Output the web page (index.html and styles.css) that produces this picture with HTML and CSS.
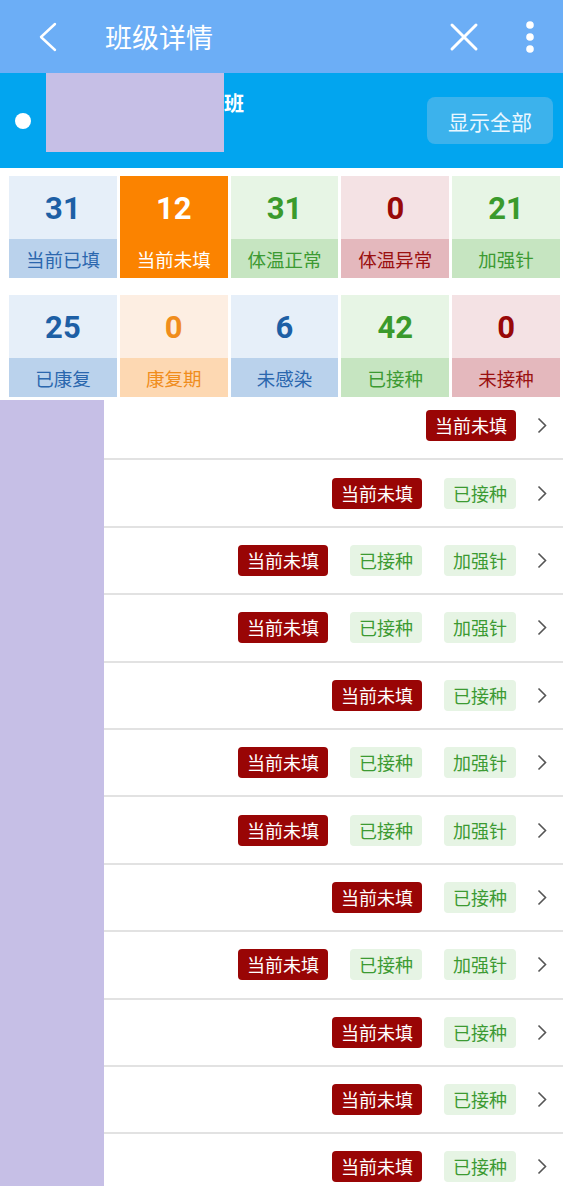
FILE: index.html
```html
<!DOCTYPE html>
<html lang="zh">
<head>
<meta charset="utf-8">
<title>班级详情</title>
<link rel="stylesheet" href="styles.css">
</head>
<body>
<header class="topbar">
  <svg class="back" width="20" height="30" viewBox="0 0 20 30"><path d="M17 2 L3 15 L17 28" fill="none" stroke="#fff" stroke-width="2.4" stroke-linecap="round" stroke-linejoin="round"/></svg>
  <h1 class="title">班级详情</h1>
  <svg class="close" width="30" height="30" viewBox="0 0 30 30"><path d="M3 3 L27 27 M27 3 L3 27" fill="none" stroke="#fff" stroke-width="3" stroke-linecap="round"/></svg>
  <svg class="more" width="10" height="34" viewBox="0 0 10 34"><circle cx="5" cy="5" r="3.8" fill="#fff"/><circle cx="5" cy="17" r="3.8" fill="#fff"/><circle cx="5" cy="29" r="3.8" fill="#fff"/></svg>
</header>

<section class="band">
  <span class="dot"></span>
  <span class="redact"></span>
  <span class="cls">班</span>
  <button class="showall">显示全部</button>
</section>

<section class="stats">
  <div class="stat blue"><div class="num">31</div><div class="lbl">当前已填</div></div>
  <div class="stat active"><div class="num">12</div><div class="lbl">当前未填</div></div>
  <div class="stat green"><div class="num">31</div><div class="lbl">体温正常</div></div>
  <div class="stat red"><div class="num">0</div><div class="lbl">体温异常</div></div>
  <div class="stat green"><div class="num">21</div><div class="lbl">加强针</div></div>
  <div class="stat blue"><div class="num">25</div><div class="lbl">已康复</div></div>
  <div class="stat orange"><div class="num">0</div><div class="lbl">康复期</div></div>
  <div class="stat blue"><div class="num">6</div><div class="lbl">未感染</div></div>
  <div class="stat green"><div class="num">42</div><div class="lbl">已接种</div></div>
  <div class="stat red"><div class="num">0</div><div class="lbl">未接种</div></div>
</section>

<section class="list">
  <div class="rows">
    <div class="row"><span class="name"></span><div class="cell"><span class="tag tag-red">当前未填</span><svg class="chev" width="10" height="17" viewBox="0 0 10 17"><path d="M1.5 1.5 L8.5 8.5 L1.5 15.5" fill="none" stroke="#555" stroke-width="1.6"/></svg></div></div>
    <div class="row"><span class="name"></span><div class="cell"><span class="tag tag-red">当前未填</span><span class="tag tag-green">已接种</span><svg class="chev" width="10" height="17" viewBox="0 0 10 17"><path d="M1.5 1.5 L8.5 8.5 L1.5 15.5" fill="none" stroke="#555" stroke-width="1.6"/></svg></div></div>
    <div class="row"><span class="name"></span><div class="cell"><span class="tag tag-red">当前未填</span><span class="tag tag-green">已接种</span><span class="tag tag-green">加强针</span><svg class="chev" width="10" height="17" viewBox="0 0 10 17"><path d="M1.5 1.5 L8.5 8.5 L1.5 15.5" fill="none" stroke="#555" stroke-width="1.6"/></svg></div></div>
    <div class="row"><span class="name"></span><div class="cell"><span class="tag tag-red">当前未填</span><span class="tag tag-green">已接种</span><span class="tag tag-green">加强针</span><svg class="chev" width="10" height="17" viewBox="0 0 10 17"><path d="M1.5 1.5 L8.5 8.5 L1.5 15.5" fill="none" stroke="#555" stroke-width="1.6"/></svg></div></div>
    <div class="row"><span class="name"></span><div class="cell"><span class="tag tag-red">当前未填</span><span class="tag tag-green">已接种</span><svg class="chev" width="10" height="17" viewBox="0 0 10 17"><path d="M1.5 1.5 L8.5 8.5 L1.5 15.5" fill="none" stroke="#555" stroke-width="1.6"/></svg></div></div>
    <div class="row"><span class="name"></span><div class="cell"><span class="tag tag-red">当前未填</span><span class="tag tag-green">已接种</span><span class="tag tag-green">加强针</span><svg class="chev" width="10" height="17" viewBox="0 0 10 17"><path d="M1.5 1.5 L8.5 8.5 L1.5 15.5" fill="none" stroke="#555" stroke-width="1.6"/></svg></div></div>
    <div class="row"><span class="name"></span><div class="cell"><span class="tag tag-red">当前未填</span><span class="tag tag-green">已接种</span><span class="tag tag-green">加强针</span><svg class="chev" width="10" height="17" viewBox="0 0 10 17"><path d="M1.5 1.5 L8.5 8.5 L1.5 15.5" fill="none" stroke="#555" stroke-width="1.6"/></svg></div></div>
    <div class="row"><span class="name"></span><div class="cell"><span class="tag tag-red">当前未填</span><span class="tag tag-green">已接种</span><svg class="chev" width="10" height="17" viewBox="0 0 10 17"><path d="M1.5 1.5 L8.5 8.5 L1.5 15.5" fill="none" stroke="#555" stroke-width="1.6"/></svg></div></div>
    <div class="row"><span class="name"></span><div class="cell"><span class="tag tag-red">当前未填</span><span class="tag tag-green">已接种</span><span class="tag tag-green">加强针</span><svg class="chev" width="10" height="17" viewBox="0 0 10 17"><path d="M1.5 1.5 L8.5 8.5 L1.5 15.5" fill="none" stroke="#555" stroke-width="1.6"/></svg></div></div>
    <div class="row"><span class="name"></span><div class="cell"><span class="tag tag-red">当前未填</span><span class="tag tag-green">已接种</span><svg class="chev" width="10" height="17" viewBox="0 0 10 17"><path d="M1.5 1.5 L8.5 8.5 L1.5 15.5" fill="none" stroke="#555" stroke-width="1.6"/></svg></div></div>
    <div class="row"><span class="name"></span><div class="cell"><span class="tag tag-red">当前未填</span><span class="tag tag-green">已接种</span><svg class="chev" width="10" height="17" viewBox="0 0 10 17"><path d="M1.5 1.5 L8.5 8.5 L1.5 15.5" fill="none" stroke="#555" stroke-width="1.6"/></svg></div></div>
    <div class="row"><span class="name"></span><div class="cell"><span class="tag tag-red">当前未填</span><span class="tag tag-green">已接种</span><svg class="chev" width="10" height="17" viewBox="0 0 10 17"><path d="M1.5 1.5 L8.5 8.5 L1.5 15.5" fill="none" stroke="#555" stroke-width="1.6"/></svg></div></div>
  </div>
</section>
</body>
</html>
```

FILE: styles.css
```css
* { box-sizing: border-box; }
html, body { margin: 0; padding: 0; }
body {
  width: 563px;
  height: 1199px;
  overflow: hidden;
  background: #fff;
  font-family: "Noto Sans CJK SC", "Noto Sans", sans-serif;
}

.topbar {
  height: 73px;
  background: #6caef6;
  display: flex;
  align-items: center;
}
.back { margin-left: 38px; }
.title {
  margin: 0 0 0 47px;
  font-size: 27px;
  font-weight: 400;
  color: #fff;
  line-height: 1;
}
.close { margin-left: auto; margin-right: -1px; }
.more { margin: 0 28px 0 47px; }

.band {
  height: 95px;
  background: #02a5ef;
  display: flex;
  align-items: flex-start;
}
.dot {
  width: 16px;
  height: 16px;
  border-radius: 50%;
  background: #fff;
  margin: 40px 0 0 15px;
}
.redact {
  width: 178px;
  height: 79px;
  background: #c6bfe6;
  margin-left: 15px;
}
.cls {
  margin-top: 18px;
  font-size: 20px;
  line-height: 24px;
  font-weight: 700;
  color: #fff;
}
.showall {
  margin: 24px 10px 0 auto;
  width: 126px;
  height: 47px;
  border: 0;
  border-radius: 8px;
  background: #3cb2ec;
  color: #eaf7ff;
  font-family: inherit;
  font-size: 21px;
  padding: 0;
}

.stats {
  display: grid;
  grid-template-columns: repeat(5, 1fr);
  column-gap: 3px;
  row-gap: 17px;
  padding: 8px 3px 0 9px;
}
.stat { display: flex; flex-direction: column; }
.num {
  height: 63px;
  display: flex;
  align-items: center;
  justify-content: center;
  font-family: "Roboto", sans-serif;
  font-weight: 700;
  font-size: 31px;
  padding-top: 2px;
}
.lbl {
  height: 39px;
  display: flex;
  align-items: center;
  justify-content: center;
  font-size: 18.5px;
}
.blue .num { background: #e6eff9; color: #1d5fa5; }
.blue .lbl { background: #bad2ec; color: #2b67ae; }
.green .num { background: #e7f5e5; color: #3a9a2c; }
.green .lbl { background: #c6e5c1; color: #3c9a32; }
.red .num { background: #f4e2e4; color: #980808; }
.red .lbl { background: #e4b8bd; color: #9a1010; }
.orange .num { background: #fdeee2; color: #f08d1c; }
.orange .lbl { background: #fdd8b2; color: #f08d1c; }
.active .num, .active .lbl { background: #fb8300; color: #fff; }

.list {
  margin-top: 3px;
  height: 786px;
  overflow: hidden;
}
.rows { margin-top: -7px; }
.row {
  display: flex;
  height: 67.4px;
}
.name {
  width: 104px;
  flex: none;
  background: #c6bfe6;
}
.cell {
  flex: 1;
  display: flex;
  align-items: center;
  justify-content: flex-end;
  gap: 22px;
  padding-right: 16px;
  border-bottom: 2px solid #e2e2e2;
}
.tag {
  height: 31px;
  line-height: 31px;
  padding: 0 9px;
  border-radius: 4px;
  font-size: 18px;
}
.tag-red { background: #990505; color: #fff; }
.tag-green { background: #e6f4e4; color: #3c9a32; }
.chev { margin-left: -1px; }
```
